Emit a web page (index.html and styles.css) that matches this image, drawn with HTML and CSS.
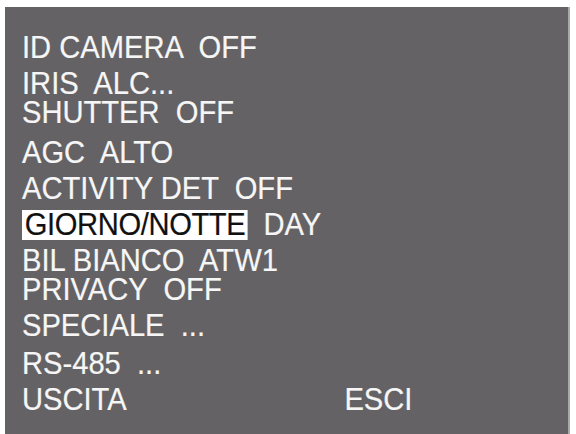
FILE: index.html
```html
<!DOCTYPE html>
<html>
<head>
<meta charset="utf-8">
<link rel="stylesheet" href="styles.css">
</head>
<body>
<div class="screen">
  <div class="menu">
    <div class="row first">ID CAMERA  OFF</div>
    <div class="row">IRIS  ALC...</div>
    <div class="row tight">SHUTTER  OFF</div>
    <div class="row loose">AGC  ALTO</div>
    <div class="row">ACTIVITY DET  OFF</div>
    <div class="row"><span class="sel">GIORNO/NOTTE</span>  DAY</div>
    <div class="row">BIL BIANCO  ATW1</div>
    <div class="row tight">PRIVACY  OFF</div>
    <div class="row">SPECIALE  ...</div>
    <div class="row plus">RS-485  ...</div>
    <div class="row split"><span class="label">USCITA</span><span>ESCI</span></div>
  </div>
</div>
</body>
</html>
```

FILE: styles.css
```css
html, body {
  margin: 0;
  padding: 0;
  background: #ffffff;
  height: 100%;
}
body {
  overflow: hidden;
}
.screen {
  margin: 7px 0 0 5px;
  width: 565px;
  height: 440px;
  background: #646264;
  border-right: 2px solid #a9a9a9;
  box-sizing: border-box;
  padding: 26px 0 0 17px;
}
.menu {
  font-family: "Liberation Sans", Arial, sans-serif;
  font-size: 31px;
  line-height: 29px;
  color: #f6f6f6;
  -webkit-text-stroke: 0.2px #f6f6f6;
  transform: scaleX(0.94);
  transform-origin: left top;
}
.row {
  height: 29px;
  margin-top: 7px;
  white-space: pre;
}
.row.first {
  margin-top: 0;
}
.row.tight {
  margin-top: 0;
}
.row.loose {
  margin-top: 11px;
}
.row.plus {
  margin-top: 9px;
}
.sel {
  display: inline-block;
  background: #ffffff;
  color: #111111;
  -webkit-text-stroke: 0.2px #111111;
  line-height: 29px;
  height: 29px;
  padding: 0 2px 1px 3px;
  vertical-align: top;
  letter-spacing: -0.4px;
}
.split {
  display: grid;
  grid-template-columns: 343px auto;
}
```
